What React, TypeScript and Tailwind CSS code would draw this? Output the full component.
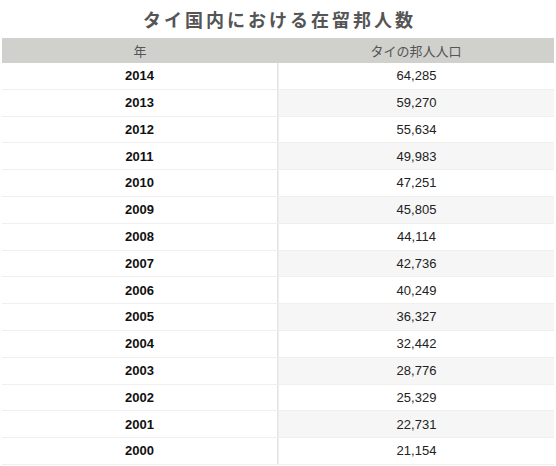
import React from "react";

const rows: [string, string][] = [
  ["2014", "64,285"],
  ["2013", "59,270"],
  ["2012", "55,634"],
  ["2011", "49,983"],
  ["2010", "47,251"],
  ["2009", "45,805"],
  ["2008", "44,114"],
  ["2007", "42,736"],
  ["2006", "40,249"],
  ["2005", "36,327"],
  ["2004", "32,442"],
  ["2003", "28,776"],
  ["2002", "25,329"],
  ["2001", "22,731"],
  ["2000", "21,154"],
];

export default function App() {
  return (
    <div
      className="w-[556px] h-[466px] bg-white overflow-hidden"
      style={{ fontFamily: '"Liberation Sans", "Noto Sans CJK JP", sans-serif' }}
    >
      <div
        className="h-[38px] flex items-center justify-center text-[18px] font-semibold text-[#555] tracking-[3px] pl-[3px]"
        style={{ fontFamily: '"Noto Sans CJK JP", sans-serif' }}
      >
        タイ国内における在留邦人数
      </div>
      <div className="mx-[2px] w-[552px]">
        <div className="flex h-[25px] bg-[#d0d0cd] text-[#555] text-[13px] items-center">
          <div className="w-[276px] text-center" style={{ fontFamily: '"Noto Sans CJK JP", sans-serif' }}>年</div>
          <div className="flex-1 text-center" style={{ fontFamily: '"Noto Sans CJK JP", sans-serif' }}>タイの邦人人口</div>
        </div>
        {rows.map(([y, v], i) => (
          <div key={y} className="flex h-[26.8px] border-b border-[#efefef] text-[13px]">
            <div className="w-[276px] flex items-center justify-center font-bold text-[#111] bg-white border-r border-[#e4e4e4]">
              {y}
            </div>
            <div
              className={
                "flex-1 flex items-center justify-center text-[#222] border-l border-[#eeeeee] " +
                (i % 2 === 1 ? "bg-[#f6f6f6]" : "bg-white")
              }
            >
              {v}
            </div>
          </div>
        ))}
      </div>
    </div>
  );
}
